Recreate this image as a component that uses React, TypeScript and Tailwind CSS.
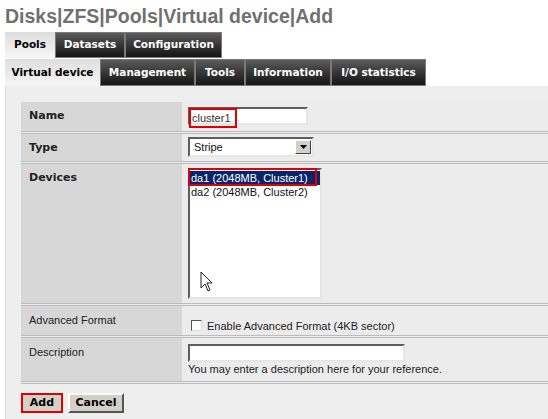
const bold = "font-['DejaVu_Sans',Verdana,sans-serif] font-bold";
const plain = "font-['Liberation_Sans',Arial,sans-serif]";

function Tab({ label, w, active }: { label: string; w: string; active?: boolean }) {
  return active ? (
    <div className={`${w} flex items-center justify-center bg-gradient-to-b from-[#dedede] to-[#f6f6f6] text-[10.5px] text-black ${bold}`}>
      {label}
    </div>
  ) : (
    <div className={`${w} flex items-center justify-center border border-[#7a7a7a] bg-gradient-to-b from-[#5c5c5c] to-[#151515] text-[10.5px] text-white ${bold}`}>
      {label}
    </div>
  );
}

function Row({ label, strong, h, children }: { label: string; strong?: boolean; h: string; children: React.ReactNode }) {
  return (
    <div className={`flex ${h} border-b-[3px] border-double border-[#bcbcbc]`}>
      <div className={`w-[161px] shrink-0 bg-[#d7d7d7] pl-2 pt-[6px] text-[11px] text-[#222] ${strong ? bold : plain}`}>
        {label}
      </div>
      <div className="flex-1 bg-[#ececec] pl-[6px]">{children}</div>
    </div>
  );
}

const sunken = "border-2 border-t-[#5e5e5e] border-l-[#5e5e5e] border-b-[#e6e6e6] border-r-[#e6e6e6] bg-white";

export default function App() {
  return (
    <div className="relative h-[419px] w-[548px] overflow-hidden bg-white">
      <h1 className="pl-[5px] pt-[4px] font-['Liberation_Sans',Arial,sans-serif] text-[19.5px] font-bold leading-[24px] text-[#707070]">
        Disks|ZFS|Pools|Virtual device|Add
      </h1>

      <div className="mt-[4px] flex h-[26px] pl-[5px]">
        <Tab label="Pools" w="w-[50px]" active />
        <Tab label="Datasets" w="w-[70px]" />
        <Tab label="Configuration" w="w-[97px]" />
      </div>
      <div className="mt-[1px] flex h-[27px] pl-[5px]">
        <Tab label="Virtual device" w="w-[95px]" active />
        <Tab label="Management" w="w-[95px]" />
        <Tab label="Tools" w="w-[50px]" />
        <Tab label="Information" w="w-[86px]" />
        <Tab label="I/O statistics" w="w-[95px]" />
      </div>

      <div className="ml-[5px] h-[333px] border-l border-[#dcdcdc] bg-[#eeeeee] pl-[15px] pt-[16px]">
        <Row label="Name" strong h="h-[32px]">
          <div className={`relative mt-[5px] h-[18px] w-[120px] ${sunken}`}>
            <span className={`absolute left-[-1px] top-[-1px] h-[20px] w-[48px] border-2 border-[#e00000] pl-[1px] text-[11px] leading-[16px] text-[#333] ${plain}`}>
              cluster1
            </span>
          </div>
        </Row>

        <Row label="Type" strong h="h-[30px]">
          <div className={`mt-[3px] flex h-[20px] w-[126px] items-center justify-between border-2 border-t-[#5e5e5e] border-l-[#5e5e5e] border-b-[#e6e6e6] border-r-[#e6e6e6] bg-white pl-[4px] text-[11px] text-[#111] ${plain}`}>
            Stripe
            <div className="mr-[1px] flex h-[14px] w-[16px] items-center justify-center border border-t-white border-l-white border-b-[#404040] border-r-[#404040] bg-[#d4d0c8]">
              <svg width="7" height="4" viewBox="0 0 7 4"><path d="M0 0h7L3.5 4z" fill="#000" /></svg>
            </div>
          </div>
        </Row>

        <Row label="Devices" strong h="h-[142px]">
          <div className={`relative mt-[4px] h-[131px] w-[134px] ${sunken} text-[11px] leading-[14px] ${plain}`}>
            <div className="mt-[1px] bg-[#0a246a] pl-[1px] text-white">da1 (2048MB, Cluster1)</div>
            <div className="pl-[1px] text-[#111]">da2 (2048MB, Cluster2)</div>
            <div className="absolute left-[-2px] top-[-2px] h-[18px] w-[129px] border-2 border-[#e00000]" />
          </div>
        </Row>

        <Row label="Advanced Format" h="h-[32px]">
          <div className={`mt-[10px] flex items-center gap-[5px] pl-[3px] text-[11px] text-[#222] ${plain}`}>
            <div className="h-[11px] w-[11px] border border-t-[#555] border-l-[#555] border-b-[#ddd] border-r-[#ddd] bg-white" />
            <span className="mt-[2px]">Enable Advanced Format (4KB sector)</span>
          </div>
        </Row>

        <Row label="Description" h="h-[46px]">
          <div className={`mt-[6px] h-[18px] w-[217px] ${sunken}`} />
          <div className={`mt-[1px] text-[11px] leading-[13px] text-[#222] ${plain}`}>
            You may enter a description here for your reference.
          </div>
        </Row>

        <div className="mt-[9px] flex gap-[5px]">
          <button className={`h-[20px] w-[42px] border-2 border-[#e00000] bg-[#d4d0c8] text-[11px] text-black ${bold}`}>
            Add
          </button>
          <button className={`h-[20px] w-[56px] border-2 border-t-white border-l-white border-b-[#555] border-r-[#555] bg-[#d4d0c8] text-[11px] text-black ${bold}`}>
            Cancel
          </button>
        </div>
      </div>

      <svg className="absolute left-[200px] top-[271px]" width="13" height="21" viewBox="0 0 13 21">
        <path d="M1 1v16l4-4 3 7 2-1-3-7h5z" fill="#fff" stroke="#222" strokeWidth="1" strokeLinejoin="round" />
      </svg>
    </div>
  );
}
